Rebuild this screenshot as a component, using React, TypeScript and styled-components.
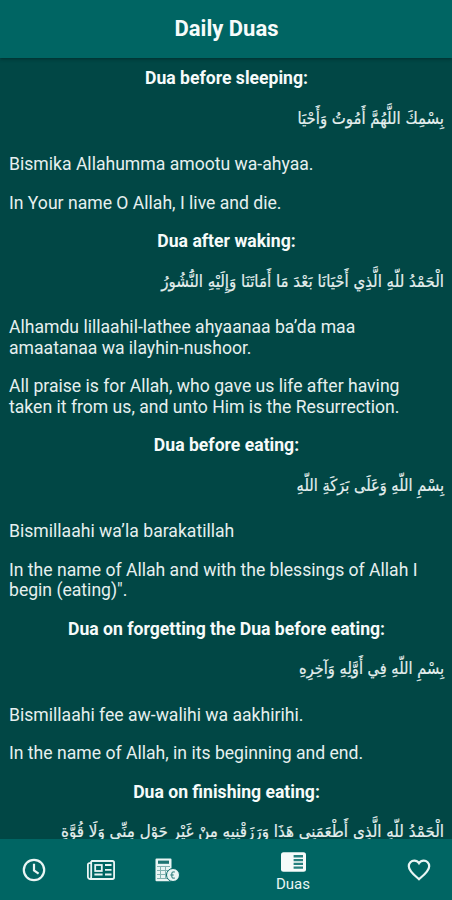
import React from "react";
import styled, { createGlobalStyle } from "styled-components";

const GlobalStyle = createGlobalStyle`
  body {
    margin: 0;
    background: #014745;
  }
`;

const Screen = styled.div`
  display: flex;
  flex-direction: column;
  width: 452px;
  height: 900px;
  overflow: hidden;
  background: #014745;
  color: #e6f0ef;
  font-family: Roboto, sans-serif;
`;

const Header = styled.header`
  flex: none;
  display: flex;
  align-items: center;
  justify-content: center;
  height: 58px;
  background: #006563;
  box-shadow: 0 1px 3px rgba(0, 30, 30, 0.6);
`;

const Title = styled.h1`
  margin: 0 0 0 1px;
  color: #f6fbfa;
  font-size: 22px;
  font-weight: 700;
  line-height: 26px;
`;

const DuaList = styled.main`
  flex: 1;
  min-height: 0;
  overflow: hidden;
  display: flex;
  flex-direction: column;
  gap: 17.7px;
  padding: 10.4px 8px 0 9px;
`;

const DuaSection = styled.section`
  flex: none;
  display: flex;
  flex-direction: column;
  gap: 17.7px;
`;

const DuaHeading = styled.h2`
  margin: 0;
  color: #f6fbfa;
  text-align: center;
  font-size: 17.6px;
  font-weight: 700;
  line-height: 20.7px;
`;

const Arabic = styled.p<{ $stretch: number }>`
  margin: 0;
  height: 29.9px;
  direction: rtl;
  white-space: nowrap;
  font-family: "DejaVu Sans", sans-serif;
  font-size: 16.5px;
  line-height: 24px;
  -webkit-text-stroke: 0.2px currentColor;
  transform: scaleX(${(p) => p.$stretch});
  transform-origin: right center;
`;

const Line = styled.p`
  margin: 0;
  white-space: pre-line;
  font-size: 17.6px;
  line-height: 20.7px;
`;

const TabBar = styled.nav`
  flex: none;
  display: grid;
  grid-template-columns: 67px 67px 67px 184px 67px;
  height: 61px;
  background: #006563;
`;

const Tab = styled.a<{ $active?: boolean }>`
  display: flex;
  flex-direction: column;
  align-items: center;
  justify-content: center;
  gap: 4px;
  padding-top: ${(p) => (p.$active ? "5px" : "0")};
  color: #e9f5f4;
`;

const TabLabel = styled.span`
  font-size: 15px;
  line-height: 17px;
`;

const Icon = styled.svg`
  display: block;
  overflow: visible;
`;

const ClockIcon = () => (
  <Icon width="24" height="24" viewBox="0 0 24 24" fill="none" stroke="currentColor" strokeWidth="2.2">
    <circle cx="12" cy="12" r="10.2" />
    <path d="M12 5.800v6.600l4.600 3.200" />
  </Icon>
);

const NewsIcon = () => (
  <Icon width="28" height="20" viewBox="0 0 28 20" fill="none" stroke="currentColor" strokeWidth="1.8">
    <path d="M4.200 1h21.200a1.700 1.700 0 0 1 1.700 1.700v14.600a1.700 1.700 0 0 1-1.700 1.700H3.200A2.300 2.300 0 0 1 .9 16.700V4.600a1.400 1.400 0 0 1 1.400-1.400h1.900" />
    <path d="M4.200 1v15.500a2 2 0 0 1-1 2.300" />
    <rect x="8.200" y="5" width="6.600" height="6" />
    <path d="M7.400 14.500h8.200M18 5h6.500M18 9.800h6.500M18 14.500h6.500" />
  </Icon>
);

const CalculatorIcon = () => (
  <Icon width="25" height="24" viewBox="0 0 25 24">
    <path fill="currentColor" d="M1.500.5h14a1 1 0 0 1 1 1v20.800a1 1 0 0 1-1 1h-14a1 1 0 0 1-1-1V1.500a1 1 0 0 1 1-1z" />
    <path fill="#1c7371" d="M3 2.600h11v3.200H3z" />
    <path stroke="#82b3b1" strokeWidth="1" d="M2 8.500h13M2 12.500h13M2 16.500h13M2 20.500h13M5.500 8v13M10.500 8v13" />
    <circle cx="18" cy="17" r="6.500" fill="currentColor" stroke="#006563" strokeWidth="1" />
    <path fill="none" stroke="#4d9291" strokeWidth="1.300" d="M19.800 14.200c-2-1-3.200 0-3.200 2.800s1.200 3.800 3.200 2.800M15.400 17h3.200" />
  </Icon>
);

const ReaderIcon = () => (
  <Icon width="25" height="20" viewBox="0 0 25 20">
    <rect x="0" y="0.300" width="25" height="19.400" rx="2.500" fill="#f6fbfa" />
    <path fill="#25807e" d="M12.600 3h9.400v2.600h-9.400zM12.600 7h9.400v2.300h-9.400zM12.600 10.800h9.400v2.300h-9.400zM12.600 14.500h9.400v2.300h-9.400z" />
  </Icon>
);

const HeartIcon = () => (
  <Icon width="24" height="24" viewBox="0 0 24 24" fill="none" stroke="currentColor" strokeWidth="2.2">
    <path d="M12 21.200C8.500 18 1.800 13.200 1.800 8.200a5.400 5.400 0 0 1 5.500-5.500C9.200 2.700 11 3.700 12 5.200c1-1.500 2.800-2.500 4.700-2.500A5.400 5.400 0 0 1 22.200 8.200c0 5-6.700 9.800-10.200 13z" />
  </Icon>
);

interface Dua {
  title: string;
  arabic: string;
  stretch: number;
  lines: string[];
}

const duas: Dua[] = [
  {
    title: "Dua before sleeping:",
    arabic: "بِسْمِكَ اللَّهُمَّ أَمُوتُ وَأَحْيَا",
    stretch: 0.902,
    lines: ["Bismika Allahumma amootu wa-ahyaa.", "In Your name O Allah, I live and die."],
  },
  {
    title: "Dua after waking:",
    arabic: "الْحَمْدُ للّهِ الَّذِي أَحْيَانَا بَعْدَ مَا أَمَاتَنَا وَإِلَيْهِ النُّشُورُ",
    stretch: 0.91,
    lines: [
      "Alhamdu lillaahil-lathee ahyaanaa ba’da maa\namaatanaa wa ilayhin-nushoor.",
      "All praise is for Allah, who gave us life after having\ntaken it from us, and unto Him is the Resurrection.",
    ],
  },
  {
    title: "Dua before eating:",
    arabic: "بِسْمِ اللّهِ وَعَلَى بَرَكَةِ اللّهِ",
    stretch: 0.885,
    lines: [
      "Bismillaahi wa’la barakatillah",
      "In the name of Allah and with the blessings of Allah I\nbegin (eating)\".",
    ],
  },
  {
    title: "Dua on forgetting the Dua before eating:",
    arabic: "بِسْمِ اللّهِ فِي أَوَّلِهِ وَآخِرِهِ",
    stretch: 0.885,
    lines: ["Bismillaahi fee aw-walihi wa aakhirihi.", "In the name of Allah, in its beginning and end."],
  },
  {
    title: "Dua on finishing eating:",
    arabic: "الْحَمْدُ للّهِ الَّذِي أَطْعَمَنِي هَذَا وَرَزَقْنِيهِ مِنْ غَيْرِ حَوْلٍ مِنِّي وَلَا قُوَّةٍ",
    stretch: 0.916,
    lines: [],
  },
];

export default function App() {
  return (
    <Screen>
      <GlobalStyle />
      <Header>
        <Title>Daily Duas</Title>
      </Header>
      <DuaList>
        {duas.map((dua) => (
          <DuaSection key={dua.title}>
            <DuaHeading>{dua.title}</DuaHeading>
            <Arabic lang="ar" $stretch={dua.stretch}>
              {dua.arabic}
            </Arabic>
            {dua.lines.map((line) => (
              <Line key={line}>{line}</Line>
            ))}
          </DuaSection>
        ))}
      </DuaList>
      <TabBar>
        <Tab>
          <ClockIcon />
        </Tab>
        <Tab>
          <NewsIcon />
        </Tab>
        <Tab>
          <CalculatorIcon />
        </Tab>
        <Tab $active>
          <ReaderIcon />
          <TabLabel>Duas</TabLabel>
        </Tab>
        <Tab>
          <HeartIcon />
        </Tab>
      </TabBar>
    </Screen>
  );
}
